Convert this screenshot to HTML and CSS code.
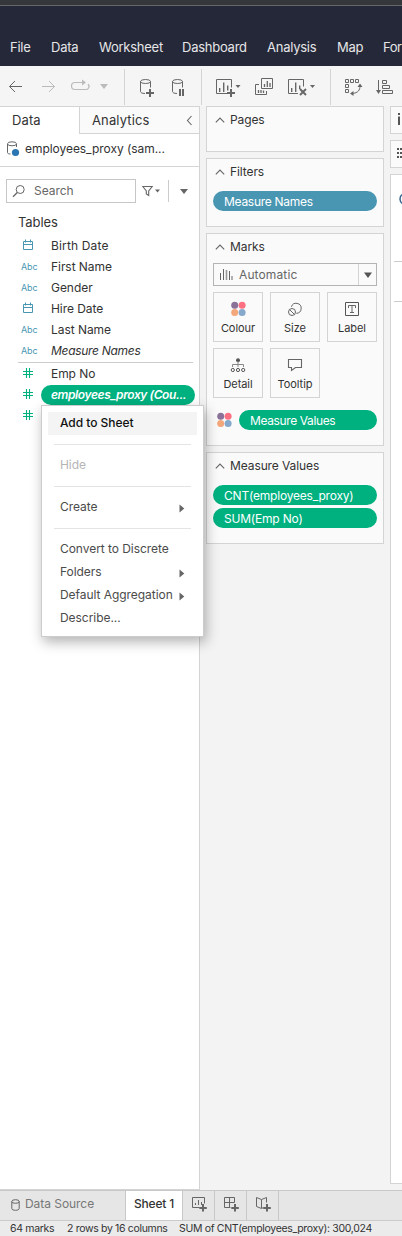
FILE: index.html
```html
<!DOCTYPE html>
<html lang="en">
<head>
<meta charset="utf-8">
<title>Sheet 1</title>
<link rel="stylesheet" href="styles.css">
</head>
<body>
<svg class="defs" aria-hidden="true">
  <symbol id="chev" viewBox="0 0 10 8"><path d="M.8 6.300 5 2l4.200 4.300" fill="none" stroke="#666" stroke-width="1.100"/></symbol>
  <symbol id="date" viewBox="0 0 12 12"><path d="M1.500 2.500h9v8h-9zM1.500 5.500h9M3.500 .5v3M8.500 .5v3" fill="none" stroke="#4996b2"/></symbol>
  <symbol id="num" viewBox="0 0 12 12"><path d="M4.500 1v10M7.500 1v10M1 4.500h10M1 7.500h10" fill="none" stroke="#00b180" stroke-width="1.100"/></symbol>
  <symbol id="dots" viewBox="0 0 16 16"><circle cx="4.700" cy="4.200" r="3.500" fill="#8a7299"/><circle cx="12.100" cy="4.200" r="3.500" fill="#fc7182"/><circle cx="4.700" cy="11.600" r="3.500" fill="#f5a77c"/><circle cx="12.100" cy="11.600" r="3.500" fill="#86a8cb"/></symbol>
  <symbol id="arrow" viewBox="0 0 6 9"><path d="M.5.500 5.300 4.500.5 8.500z" fill="#666"/></symbol>
</svg>
<div class="app">
  <div class="titlebar"></div>
  <nav class="menubar">
    <span class="mb-file">File</span><span class="mb-data">Data</span><span class="mb-worksheet">Worksheet</span><span class="mb-dashboard">Dashboard</span><span class="mb-analysis">Analysis</span><span class="mb-map">Map</span><span class="mb-format">For</span>
  </nav>
  <div class="toolbar">
    <svg width="32" height="40" viewBox="0 66 32 40"><path d="M22 86.500H9.500M15 81l-5.500 5.500L15 92"/></svg>
    <svg class="off" width="32" height="40" viewBox="32 66 32 40"><path d="M42 86.500h12.500M49 81l5.500 5.500L49 92"/></svg>
    <svg class="off" width="32" height="40" viewBox="64 66 32 40"><path d="M83.500 82.500H75a3.300 3.300 0 0 0 0 7h10.500a3.200 3.200 0 0 0 2.500-5.500" stroke-width="1.200"/><path d="M82 79.500l4 3-4 3z" fill="#bbb" stroke="none"/></svg>
    <svg width="28" height="40" viewBox="96 66 28 40"><path d="M100 84h8l-4 5z" fill="#bbb" stroke="none"/></svg>
    <i class="sep"></i>
    <svg width="38" height="40" viewBox="125 66 38 40"><path d="M145 93.500c-3 0-4.500-1-4.500-2V81.500M150.500 81.500v6"/><ellipse cx="145.500" cy="81.500" rx="5" ry="2"/><path d="M150 89v8M146 93h8" stroke-width="2"/></svg>
    <svg width="38" height="40" viewBox="163 66 38 40"><path d="M177 93.500c-3 0-4.500-1-4.500-2V81.500M182.500 81.500v6"/><ellipse cx="177.500" cy="81.500" rx="5" ry="2"/><path d="M180 89v7M183 89v7" stroke-width="2"/></svg>
    <i class="sep"></i>
    <svg width="45" height="40" viewBox="202 66 45 40"><path d="M227 93.500H216.500v-14h15v8"/><path d="M219.700 88v4M223.700 82.500v9.500M227.700 85.500v5" stroke-width="1.400"/><path d="M231 89v8M227 93h8" stroke-width="2"/><path d="M235.500 85h5l-2.500 3z" fill="#666" stroke="none"/></svg>
    <svg width="33" height="40" viewBox="247 66 33 40"><path d="M261.500 88.500v-10h11v10zM259 84.500h-3.500v10h11v-3.500"/><path d="M264.500 84v3M267.300 81v6M270 83v4M258.500 90v3M261 90v3M263.500 90.500v2.500" stroke-width="1.300"/></svg>
    <svg width="50" height="40" viewBox="280 66 50 40"><path d="M298 93.500h-9.500v-14h15v7"/><path d="M291.700 88v4M295.700 82.500v9.500M299.700 85.500v3.500" stroke-width="1.400"/><path d="M300 89l6 6M306 89l-6 6" stroke-width="1.900"/><path d="M310 85h5l-2.500 3z" fill="#666" stroke="none"/></svg>
    <i class="sep"></i>
    <svg width="37" height="40" viewBox="331 66 37 40"><path d="M345.500 79.500h3v3h-3zM350.500 79.500h3v3h-3zM355.500 79.500h3v3h-3zM345.500 84.500h3v3h-3zM345.500 89.500h3v3h-3zM360 86c0 4-2 7-7.500 7.500"/><path d="M357.500 87h5L360 83.500zM353.500 91v5L350 93.500z" fill="#666" stroke="none"/></svg>
    <svg width="34" height="40" viewBox="368 66 34 40"><path d="M378.500 80v12M382.500 80.500h4v3h-4zM382.500 85.500h7v3h-7zM382.500 90.500h10v3h-10z"/><path d="M376 90h5l-2.500 4z" fill="#666" stroke="none"/></svg>
  </div>
  <div class="work">
    <aside class="side">
      <div class="tabs"><div class="tab on">Data</div><div class="tab off-tab"><span>Analytics</span><svg width="7" height="11" viewBox="0 0 7 11"><path d="M5.500 1 1.500 5.500l4 4.500" fill="none" stroke="#666" stroke-width="1.100"/></svg></div></div>
      <div class="source"><svg width="14" height="16" viewBox="0 0 14 16"><path d="M.5 3v8.500c0 1 1 1.500 3 1.500M9.500 3v3" fill="none" stroke="#666"/><ellipse cx="5" cy="2.800" rx="4.500" ry="2" fill="none" stroke="#666"/><circle cx="8.500" cy="11.500" r="3.600" fill="#2a76b2"/></svg><span>employees_proxy (sam...</span></div>
      <div class="finder">
        <div class="search"><svg width="14" height="14" viewBox="0 0 14 14"><circle cx="8.200" cy="5.500" r="4" fill="none" stroke="#666"/><path d="M5.300 8.500 1 12.800" stroke="#666" stroke-width="1.300"/></svg><span>Search</span></div>
        <svg class="funnel" width="18" height="12" viewBox="0 0 18 12"><path d="M.8 1.500h9.400L6.700 6v4.500L4.300 9V6z" fill="none" stroke="#666" stroke-width="1.100"/><path d="M13 4.500h5l-2.500 3z" fill="#666"/></svg>
        <i class="fsep"></i>
        <svg class="drop" width="8" height="5" viewBox="0 0 8 5"><path d="M0 0h8L4 5z" fill="#666"/></svg>
      </div>
      <div class="heading">Tables</div>
      <div class="fields">
        <div class="field"><svg width="12" height="12"><use href="#date"/></svg><span class="wide">Birth Date</span></div>
        <div class="field"><b>Abc</b><span>First Name</span></div>
        <div class="field"><b>Abc</b><span>Gender</span></div>
        <div class="field"><svg width="12" height="12"><use href="#date"/></svg><span>Hire Date</span></div>
        <div class="field"><b>Abc</b><span>Last Name</span></div>
        <div class="field"><b>Abc</b><span class="it">Measure Names</span></div>
      </div>
      <div class="fields measures">
        <div class="field"><svg width="12" height="12"><use href="#num"/></svg><span>Emp No</span></div>
        <div class="field"><svg width="12" height="12"><use href="#num"/></svg><span class="picked">employees_proxy (Cou...</span></div>
        <div class="field"><svg width="12" height="12"><use href="#num"/></svg></div>
      </div>
      <div class="menu">
        <div class="mi hot">Add to Sheet</div><hr>
        <div class="mi dim">Hide</div><hr>
        <div class="mi">Create<svg width="6" height="9"><use href="#arrow"/></svg></div><hr>
        <div class="mi">Convert to Discrete</div>
        <div class="mi">Folders<svg width="6" height="9"><use href="#arrow"/></svg></div>
        <div class="mi">Default Aggregation<svg width="6" height="9"><use href="#arrow"/></svg></div>
        <div class="mi">Describe...</div>
      </div>
    </aside>
    <section class="shelves">
      <div class="card pages"><h2><svg width="10" height="8"><use href="#chev"/></svg>Pages</h2></div>
      <div class="card filters"><h2><svg width="10" height="8"><use href="#chev"/></svg>Filters</h2><div class="pill blue">Measure Names</div></div>
      <div class="card marks"><h2><svg width="10" height="8"><use href="#chev"/></svg>Marks</h2>
        <div class="select"><svg width="14" height="13" viewBox="0 0 14 13"><path d="M1.500 5v7M4.500 1v11M10.500 3v9M13 8v4" stroke="#666"/><path d="M7.500 2v10" stroke="#999" stroke-width="1.600"/></svg><span>Automatic</span><div class="open"><svg width="8" height="6" viewBox="0 0 8 6"><path d="M0 .5h8L4 6z" fill="#555"/></svg></div></div>
        <div class="grid">
          <div class="mark"><svg width="16" height="16"><use href="#dots"/></svg><span>Colour</span></div>
          <div class="mark"><svg width="16" height="16" viewBox="0 0 16 16"><path d="M4.400 5.800A5 5 0 1 1 9.300 12.300" fill="none" stroke="#666"/><circle cx="5" cy="11" r="3.500" fill="none" stroke="#666"/><path d="M2.700 8.700l4.600 4.600" stroke="#666"/></svg><span>Size</span></div>
          <div class="mark"><svg width="16" height="16" viewBox="0 0 16 16"><path d="M1.500 1.500h13v13h-13z" fill="none" stroke="#555"/><path d="M4.500 7V4.500h7V7M8 4.500v7M6 11.500h4" fill="none" stroke="#666"/></svg><span>Label</span></div>
          <div class="mark"><svg width="16" height="16" viewBox="0 0 16 16"><circle cx="8" cy="3.200" r="2" fill="#555"/><path d="M8 4v6M2.500 10V7.500h11V10" fill="none" stroke="#888"/><g fill="none" stroke="#555"><circle cx="2.800" cy="13" r="1.600"/><circle cx="8" cy="13" r="1.600"/><circle cx="13.200" cy="13" r="1.600"/></g></svg><span>Detail</span></div>
          <div class="mark"><svg width="16" height="16" viewBox="0 0 16 16"><path d="M1.500 2.500h13v8h-6l-4 3v-3h-3z" fill="none" stroke="#666" stroke-width="1.100"/></svg><span>Tooltip</span></div>
        </div>
        <div class="encoding"><svg width="16" height="16"><use href="#dots"/></svg><div class="pill green">Measure Values</div></div>
      </div>
      <div class="card values"><h2><svg width="10" height="8"><use href="#chev"/></svg>Measure Values</h2><div class="pill green cnt">CNT(employees_proxy)</div><div class="pill green sum">SUM(Emp No)</div></div>
    </section>
    <section class="canvas">
      <div class="shelf"><svg width="11" height="26" viewBox="391 107 11 26"><path d="M399 116.500v8.500" stroke="#555" stroke-width="2"/><path d="M398 113h2v2h-2z" fill="#555"/></svg></div>
      <div class="shelf"><svg width="11" height="26" viewBox="391 141 11 26"><path d="M397 149h5M397 153h5M397 157h5" stroke="#555" stroke-width="2" stroke-dasharray="2 1"/></svg></div>
      <div class="view"><svg width="11" height="130" viewBox="391 175 11 130"><path d="M394 261.500h8M394 301.500h8" stroke="#ccc"/><path d="M403 194c-4 2-4 8 0 10" fill="none" stroke="#36638d" stroke-width="1.500"/></svg></div>
    </section>
  </div>
  <div class="sheets">
    <div class="st source-tab"><svg width="9" height="12" viewBox="0 0 9 12"><path d="M.8 2.500v7c0 2.400 7.400 2.400 7.400 0v-7" fill="none" stroke="#666"/><ellipse cx="4.500" cy="2.500" rx="3.700" ry="1.800" fill="none" stroke="#666"/></svg><span>Data Source</span></div>
    <div class="st active">Sheet 1</div>
    <div class="st new"><svg width="16" height="16" viewBox="0 0 16 16"><path d="M8.500 11.500h-7v-10h12v6M4.500 7v2M7.500 4v5M10.500 6v3" fill="none" stroke="#666"/><path d="M12 8v7.500M8.300 12h7.500" stroke="#666" stroke-width="2"/></svg></div>
    <div class="st new"><svg width="16" height="16" viewBox="0 0 16 16"><path d="M7.500 11.500h-6v-10h10v5M6.500 1.500v10M1.500 6.500h10" fill="none" stroke="#666"/><path d="M12 8v7.500M8.300 12h7.500" stroke="#666" stroke-width="2"/></svg></div>
    <div class="st new"><svg width="16" height="16" viewBox="0 0 16 16"><path d="M6.500 12.500V3.500L1.500 1.500v9l5 2M6.500 3.500l5-2v5M7 12h2" fill="none" stroke="#666"/><path d="M12 8v7.500M8.300 12h7.500" stroke="#666" stroke-width="2"/></svg></div>
  </div>
  <footer class="status"><span class="s1">64 marks</span><span class="s2">2 rows by 16 columns</span><span class="s3">SUM of CNT(employees_proxy): 300,024</span></footer>
</div>
</body>
</html>
```
FILE: styles.css
```css
* { box-sizing: border-box; }
body { margin: 0; font: 12px/16px Inter, "Liberation Sans", sans-serif; letter-spacing: -.05px; color: #333; overflow: hidden; }
svg { display: block; flex: none; }
.defs { display: none; }
.app { width: 402px; height: 1236px; overflow: hidden; display: flex; flex-direction: column; background: #f3f3f3; }
.titlebar { height: 6px; background: #36373b; border-bottom: 1px solid #66686a; flex: none; }
.menubar { height: 60px; flex: none; background: #252838; color: #e6e6e8; display: flex; padding: 33px 0 0 10px; font-size: 13px; white-space: nowrap; letter-spacing: -.25px; }
.menubar span { flex: none; }
.mb-file { width: 41px; }
.mb-data { width: 48px; }
.mb-worksheet { width: 83px; }
.mb-dashboard { width: 85px; }
.mb-analysis { width: 70px; }
.mb-map { width: 46px; }
.mb-format { letter-spacing: -.5px; }
.toolbar { height: 40px; flex: none; display: flex; background: #f5f5f5; }
.toolbar svg { fill: none; stroke: #666; stroke-width: 1; }
.toolbar svg.off { stroke: #bbb; }
.sep { width: 1px; height: 36px; margin-top: 3px; background: #d4d4d4; flex: none; }
.work { height: 1084px; flex: none; display: flex; }
.side { position: relative; width: 200px; background: #fff; border: 1px solid #d4d4d4; border-left: 0; flex: none; }
.tabs { display: flex; height: 27px; font-size: 13px; letter-spacing: .12px; }
.tab { padding: 5px 12px 0; }
.on { width: 79px; }
.off-tab { flex: 1; display: flex; justify-content: space-between; background: #fafafa; border-left: 1px solid #d4d4d4; border-bottom: 1px solid #d4d4d4; padding-right: 6px; }
.off-tab svg { margin-top: 3px; }
.source { height: 33px; border-bottom: 1px solid #d4d4d4; display: flex; padding: 7px 0 0 7px; gap: 4px; white-space: nowrap; }
.finder { display: flex; padding: 12px 0 0 6px; height: 36px; }
.search { width: 130px; height: 24px; border: 1px solid #c6c6c6; display: flex; align-items: center; padding-left: 5px; gap: 8px; color: #666; }
.funnel { margin: 6px 0 0 6px; }
.fsep { width: 1px; height: 22px; background: #ccc; margin: 1px 0 0 8px; }
.drop { margin: 10px 0 0 11px; }
.heading { height: 32px; padding: 11px 0 0 18px; font-size: 13px; letter-spacing: -.1px; }
.fields { margin: 0 6px 0 18px; }
.field { height: 21px; display: flex; align-items: center; }
.field svg { margin: -2px 17px 0 4px; }
.field b { width: 30px; padding-left: 3px; font-size: 9px; color: #4996b2; margin-right: 3px; font-weight: 400; letter-spacing: -.1px; }
.wide { letter-spacing: .15px; }
.it { font-style: italic; letter-spacing: -.3px; }
.measures { border-top: 1px solid #ccc; margin-top: 1px; }
.picked { height: 20px; width: 154px; flex: none; margin: 1px 0 0 -10px; padding-left: 10px; border-radius: 10px; background: #00b180; color: #fff; font-weight: 600; font-style: italic; line-height: 20px; letter-spacing: -.4px; }
.menu { position: absolute; left: 41px; top: 298px; width: 163px; height: 232px; background: #fff; border: 1px solid #ccc; padding: 6px; box-shadow: 2px 5px 12px rgba(0,0,0,.3); z-index: 2; color: #4b4b4b; }
.mi { height: 23px; padding: 3px 12px 0; display: flex; white-space: nowrap; justify-content: space-between; }
.mi svg { margin: 5px 0 0 0; }
.hot { background: #f4f4f4; color: #111; font-weight: 500; }
.dim { color: #b5b5b5; }
.menu hr { border: 0; height: 1px; background: #e4e4e4; margin: 9px 6px; }
.shelves { width: 190px; padding: 0 6px; flex: none; display: flex; flex-direction: column; gap: 6px; }
.card { background: #fafafa; border: 1px solid #d4d4d4; padding: 0 6px; }
.card h2 { margin: 0; height: 27px; padding: 5px 0 0 2px; font-size: 12px; font-weight: 400; display: flex; gap: 5px; letter-spacing: -.1px; }
.card h2 svg { margin-top: 4px; }
.pages { height: 46px; }
.filters { height: 69px; }
.marks { height: 213px; }
.values { height: 92px; }
.pill { height: 20px; border-radius: 10px; color: #fff; padding-left: 11px; line-height: 21px; letter-spacing: -.2px; white-space: nowrap; }
.blue { background: #4996b2; margin-top: 5px; letter-spacing: -.28px; }
.green { background: #00b180; }
.encoding .green { letter-spacing: -.38px; }
.cnt { margin: 5px 0 3px; }
.select { height: 23px; margin-top: 2px; border: 1px solid #b4b4b4; display: flex; align-items: center; padding-left: 5px; color: #666; }
.select span { margin-left: 6px; flex: 1; letter-spacing: .12px; }
.open { width: 18px; height: 21px; border-left: 1px solid #d4d4d4; display: flex; align-items: center; justify-content: center; }
.grid { margin-top: 6px; display: grid; grid-template-columns: repeat(3, 50px); gap: 6px 7px; }
.mark { height: 50px; border: 1px solid #d4d4d4; display: flex; flex-direction: column; align-items: center; padding-top: 8px; gap: 3px; font-size: 11px; }
.encoding { display: flex; margin-top: 12px; padding-left: 3px; gap: 7px; align-items: center; }
.encoding .pill { flex: 1; }
.canvas { width: 12px; flex: none; }
.shelf { height: 28px; margin-bottom: 6px; background: #fafafa; border: 1px solid #d4d4d4; border-right: 0; }
.view { height: 1010px; background: #fff; border: 1px solid #d4d4d4; border-right: 0; }
.sheets { height: 30px; flex: none; background: #e6e6e6; border-top: 1px solid #c8c8c8; display: flex; }
.st { border-right: 1px solid #c8c8c8; padding-top: 5px; white-space: nowrap; }
.source-tab { width: 126px; display: flex; gap: 5px; padding-left: 11px; color: #777; }
.source-tab svg { margin-top: 3px; }
.active { width: 57px; background: #fff; padding-left: 8px; font-weight: 500; letter-spacing: -.2px; }
.new { width: 32px; padding-left: 8px; }
.status { height: 16px; flex: none; border-top: 1px solid #ccc; background: #ebebeb; display: flex; padding-left: 10px; font-size: 10.5px; line-height: 16px; white-space: nowrap; letter-spacing: -.33px; }
.s1 { width: 57px; }
.s2 { width: 112px; }
```
